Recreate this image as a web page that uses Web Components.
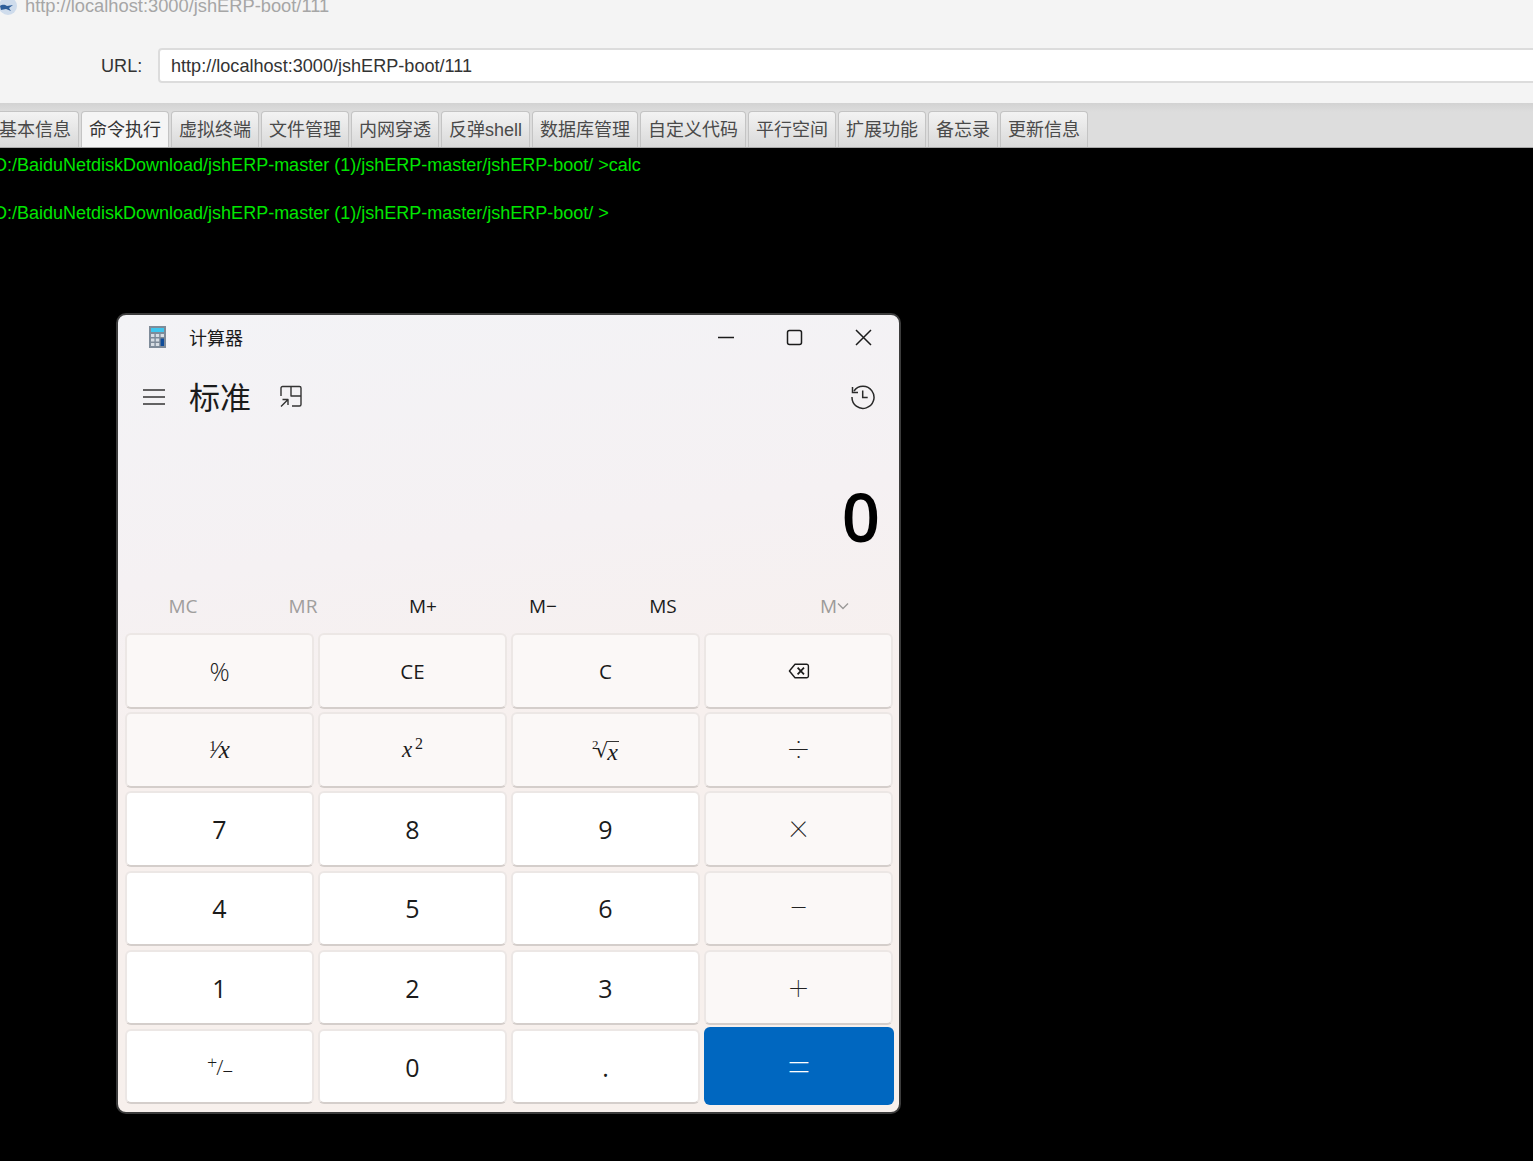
<!DOCTYPE html>
<html lang="zh">
<head>
<meta charset="utf-8">
<title>jshERP-boot</title>
<style>
  html, body { margin: 0; height: 100%; background: #000; overflow: hidden; }
  body { font-family: "Liberation Sans", "Noto Sans CJK SC", sans-serif; }
</style>
</head>
<body>
<shell-header title-text="http://localhost:3000/jshERP-boot/111"></shell-header>
<tab-strip>
  <shell-tab>基本信息</shell-tab>
  <shell-tab active>命令执行</shell-tab>
  <shell-tab>虚拟终端</shell-tab>
  <shell-tab>文件管理</shell-tab>
  <shell-tab>内网穿透</shell-tab>
  <shell-tab>反弹shell</shell-tab>
  <shell-tab>数据库管理</shell-tab>
  <shell-tab>自定义代码</shell-tab>
  <shell-tab>平行空间</shell-tab>
  <shell-tab>扩展功能</shell-tab>
  <shell-tab>备忘录</shell-tab>
  <shell-tab>更新信息</shell-tab>
</tab-strip>
<term-output>
  <div>D:/BaiduNetdiskDownload/jshERP-master (1)/jshERP-master/jshERP-boot/ &gt;calc</div>
  <div>D:/BaiduNetdiskDownload/jshERP-master (1)/jshERP-master/jshERP-boot/ &gt;</div>
</term-output>
<calc-window>
  <mem-key off>MC</mem-key>
  <mem-key off>MR</mem-key>
  <mem-key>M+</mem-key>
  <mem-key>M&#8722;</mem-key>
  <mem-key>MS</mem-key>
  <calc-key kind="op"><span style="font-size:25px;font-weight:300">%</span></calc-key>
  <calc-key kind="op">CE</calc-key>
  <calc-key kind="op">C</calc-key>
  <calc-key kind="op"><svg width="22" height="18" viewBox="0 0 22 18" fill="none" stroke="#1c1c1c" stroke-width="1.4" stroke-linejoin="round"><path d="M7 2.2h11.6a1.8 1.8 0 0 1 1.8 1.8v10a1.8 1.8 0 0 1-1.8 1.8H7L1.4 9z"/><path d="M9.6 5.6l6.4 6.8M16 5.6l-6.4 6.8" stroke-width="1.7"/></svg></calc-key>
  <calc-key kind="op"><span style="font:italic 25px 'Liberation Serif',serif"><span style="font-style:normal;font-size:15px;position:relative;top:-7px">1</span><span style="font-style:normal;margin-left:-2px">&#8260;</span>x</span></calc-key>
  <calc-key kind="op"><span style="font:italic 23px 'Liberation Serif',serif">x<span style="font-style:normal;font-size:16px;position:relative;top:-8px;margin-left:3px">2</span></span></calc-key>
  <calc-key kind="op"><span style="display:inline-flex;align-items:flex-end;font:italic 24px/24px 'Liberation Serif',serif"><span style="font-style:normal;font-size:13px;line-height:13px;align-self:flex-start;margin-right:-3px">2</span><span style="font-style:normal;font-family:'DejaVu Sans',serif;font-size:20px;line-height:24px">&#8730;</span><span style="border-top:1px solid #333;line-height:20px;height:20px;margin-left:-1px;padding-right:1px">x</span></span></calc-key>
  <calc-key kind="sym" style="font-size:38px">&#247;</calc-key>
  <calc-key>7</calc-key><calc-key>8</calc-key><calc-key>9</calc-key><calc-key kind="sym" style="font-size:38px;padding-bottom:10px">&#215;</calc-key>
  <calc-key>4</calc-key><calc-key>5</calc-key><calc-key>6</calc-key><calc-key kind="sym" style="font-size:34px">&#8722;</calc-key>
  <calc-key>1</calc-key><calc-key>2</calc-key><calc-key>3</calc-key><calc-key kind="sym" style="font-size:34px">+</calc-key>
  <calc-key><span style="font-size:21px;letter-spacing:-1px;font-weight:300"><span style="font-size:18px;position:relative;top:-6px">+</span>/<span style="position:relative;top:2px">&#8211;</span></span></calc-key>
  <calc-key>0</calc-key>
  <calc-key>.</calc-key>
  <calc-key kind="equals">=</calc-key>
</calc-window>

<script>
  class ShellHeader extends HTMLElement {
    constructor() {
      super();
      const shadow = this.attachShadow({ mode: 'open' });
      shadow.innerHTML = `
      <style>
        :host { display: block; height: 103px; overflow: hidden; background: #f4f4f4; font: 18px "Liberation Sans", sans-serif; }
        .title { display: flex; align-items: center; height: 20px; margin-top: -4px; margin-left: -1px; gap: 8px; color: #a6a6a6; font-size: 18.3px; }
        .title svg { flex: none; }
        .url { display: flex; align-items: center; margin: 32px 0 0 101px; color: #333; font-size: 18.1px; }
        .url label { width: 57px; flex: none; line-height: 22px; padding-top: 1px; }
        .box { flex: 1; height: 31px; line-height: 32px; padding-left: 11px; margin-right: -4px; background: #fff; border: 2px solid #dcdcdc; border-radius: 4px; }
      </style>
      <div class="title">
        <svg width="18" height="20" viewBox="0 0 18 20"><circle cx="9" cy="10" r="9" fill="#cfdcec"/><path d="M1 10c3-2 5-1 7 0l6-1-4 3 2 3-5-2-5 1z" fill="#2f5f9a"/></svg>
        <span></span>
      </div>
      <div class="url"><label>URL:</label><div class="box"></div></div>
      `;
      const text = this.getAttribute('title-text');
      shadow.querySelector('.title span').textContent = text;
      shadow.querySelector('.box').textContent = text;
    }
  }
  customElements.define('shell-header', ShellHeader);

  class TabStrip extends HTMLElement {
    constructor() {
      super();
      this.attachShadow({ mode: 'open' }).innerHTML = `
      <style>
        :host { display: block; height: 36px; padding-top: 8px; background: linear-gradient(#d2d2d2, #dddddd 9px); border-bottom: 1px solid #a9a9a9; overflow: hidden; }
        .row { display: flex; gap: 2px; margin-left: -9px; }
      </style>
      <div class="row"><slot></slot></div>
      `;
    }
  }
  customElements.define('tab-strip', TabStrip);

  class ShellTab extends HTMLElement {
    constructor() {
      super();
      this.attachShadow({ mode: 'open' }).innerHTML = `
      <style>
        :host { display: block; box-sizing: border-box; height: 36px; padding: 0 7px; line-height: 37px; font-size: 18px; color: #4a4a4a; white-space: nowrap;
          border: 1px solid #c4c4c4; border-bottom: 0; border-radius: 4px 4px 0 0; background: linear-gradient(#f3f3f3, #d9d9d9); }
        :host([active]) { background: #f5f5f5; color: #333; }
      </style>
      <slot></slot>
      `;
    }
  }
  customElements.define('shell-tab', ShellTab);

  class TermOutput extends HTMLElement {
    constructor() {
      super();
      this.attachShadow({ mode: 'open' }).innerHTML = `
      <style>
        :host { display: flex; flex-direction: column; gap: 24px; margin-left: -6px; margin-top: 5px; color: #00e600; font: 18px/24px "Liberation Sans", sans-serif; white-space: nowrap; }
      </style>
      <slot></slot>
      `;
    }
  }
  customElements.define('term-output', TermOutput);

  class CalcWindow extends HTMLElement {
    constructor() {
      super();
      this.attachShadow({ mode: 'open' }).innerHTML = `
      <style>
        /* a window lying on top of the terminal */
        :host { position: absolute; left: 116px; top: 313px; width: 781px; height: 797px; display: flex; flex-direction: column;
          border: 2px solid #3c3c3c; border-radius: 10px; overflow: hidden; color: #1b1b1b;
          background: linear-gradient(172deg, #f3f3f6 0%, #f5f1f3 30%, #f7f0ee 52%, #f7f0ec 100%);
          font: 18px "Open Sans", "Noto Sans CJK SC", sans-serif; }
        .title { display: flex; align-items: center; height: 46px; flex: none; padding-left: 31px; font-size: 18px; margin-top: -1px; }
        .title .name { margin-left: 23px; }
        .controls { margin-left: auto; display: flex; align-items: center; margin-right: 1px; }
        .controls svg { width: 69px; }
        .head { display: flex; align-items: center; height: 74px; flex: none; padding-left: 25px; }
        .head .mode { font-size: 31px; margin-left: 24px; margin-right: 29px; line-height: 40px; }
        .head .hist { margin-left: auto; margin-right: 23px; }
        .value { flex: none; height: 143px; display: flex; align-items: center; justify-content: flex-end; padding-right: 19px; font-size: 67px; font-weight: 600; color: #000; line-height: 1; box-sizing: border-box; padding-top: 22px; }
        .mem { flex: none; display: flex; height: 52px; margin-left: 5px; margin-right: 50px; align-items: center; padding-top: 6px; box-sizing: border-box; }
        .more { margin-left: auto; display: flex; align-items: center; color: #9c9a99; font-size: 19px; }
        .keys { flex: none; display: grid; grid-template-columns: repeat(4, 189px); grid-template-rows: repeat(6, 75.5px); gap: 3.7px 4px; margin-left: 7px; padding-top: 4px; }
      </style>
      <div class="title">
        <svg width="17" height="22" viewBox="0 0 17 22">
          <rect width="17" height="22" fill="#7e8b99"/>
          <rect x="2" y="2" width="13" height="4" fill="#3ec6ee"/>
          <g fill="#d7dde3">
            <rect x="2" y="8" width="3.4" height="3"/><rect x="6.8" y="8" width="3.4" height="3"/>
            <rect x="2" y="12.5" width="3.4" height="3"/><rect x="6.8" y="12.5" width="3.4" height="3"/>
            <rect x="2" y="17" width="3.4" height="3"/><rect x="6.8" y="17" width="3.4" height="3"/>
            <rect x="11.6" y="8" width="3.4" height="3"/>
          </g>
          <rect x="11.6" y="12.5" width="3.4" height="7.5" fill="#0f4c9a"/>
        </svg>
        <span class="name">计算器</span>
        <div class="controls">
          <svg height="22" viewBox="0 0 69 22" fill="none" stroke="#1c1c1c" stroke-width="1.4"><path d="M27 11.500h16"/></svg>
          <svg height="22" viewBox="0 0 69 22" fill="none" stroke="#1c1c1c" stroke-width="1.5"><rect x="27.500" y="4.500" width="14" height="14" rx="2"/></svg>
          <svg height="22" viewBox="0 0 69 22" fill="none" stroke="#1c1c1c" stroke-width="1.5"><path d="M27 4l15 15M42 4L27 19"/></svg>
        </div>
      </div>
      <div class="head">
        <svg width="22" height="16" viewBox="0 0 22 16" stroke="#333" stroke-width="1.5"><path d="M0 1h22M0 8h22M0 15h22"/></svg>
        <span class="mode">标准</span>
        <svg width="24" height="24" viewBox="0 0 24 24" fill="none" stroke="#333" stroke-width="1.4" stroke-linejoin="round"><path d="M1 11V3a1.500 1.500 0 0 1 1.500-1.500h17A1.500 1.500 0 0 1 21 3v16.500a1.500 1.500 0 0 1-1.500 1.500H12"/><path d="M11 1.500V11h10"/><path d="M1 21.500L8 14.500M2.500 14.500H8V20"/></svg>
        <svg class="hist" width="26" height="26" viewBox="0 0 26 26" fill="none" stroke="#2a2a2a" stroke-width="1.500"><path d="M4 7a11 11 0 1 1-2 6"/><path d="M2.500 3v5.500H8"/><path d="M12.700 6.500v7h5"/></svg>
      </div>
      <div class="value">0</div>
      <div class="mem">
        <slot name="mem"></slot>
        <div class="more">M<svg width="12" height="8" viewBox="0 0 12 8" fill="none" stroke="#9c9a99" stroke-width="1.400"><path d="M1 1.500l5 5 5-5"/></svg></div>
      </div>
      <div class="keys"><slot></slot></div>
      `;
      this.querySelectorAll('mem-key').forEach(k => k.setAttribute('slot', 'mem'));
    }
  }
  customElements.define('calc-window', CalcWindow);

  class MemKey extends HTMLElement {
    constructor() {
      super();
      this.attachShadow({ mode: 'open' }).innerHTML = `
      <style>
        :host { display: block; width: 120px; text-align: center; font-size: 19px; color: #1b1b1b; }
        :host([off]) { color: #a09e9d; }
      </style>
      <slot></slot>
      `;
    }
  }
  customElements.define('mem-key', MemKey);

  class CalcKey extends HTMLElement {
    constructor() {
      super();
      this.attachShadow({ mode: 'open' }).innerHTML = `
      <style>
        :host { display: flex; align-items: center; justify-content: center; box-sizing: border-box; font: 25px "Open Sans", sans-serif; color: #1b1b1b; background: #fff;
          border: 2px solid #ece7e5; border-bottom-color: #d4cecb; border-radius: 6px; }
        :host([kind="op"]), :host([kind="sym"]) { background: #fbf8f7; font-size: 20.5px; }
        :host([kind="sym"]) { font-family: Roboto, sans-serif; font-weight: 100; color: #222; line-height: 1; }
        :host([kind="equals"]) { background: #0067c0; border: 0; margin: -2px -1px -1px 0; color: #fff; font: 100 46px Roboto, sans-serif; }
      </style>
      <slot></slot>
      `;
    }
  }
  customElements.define('calc-key', CalcKey);
</script>
</body>
</html>
